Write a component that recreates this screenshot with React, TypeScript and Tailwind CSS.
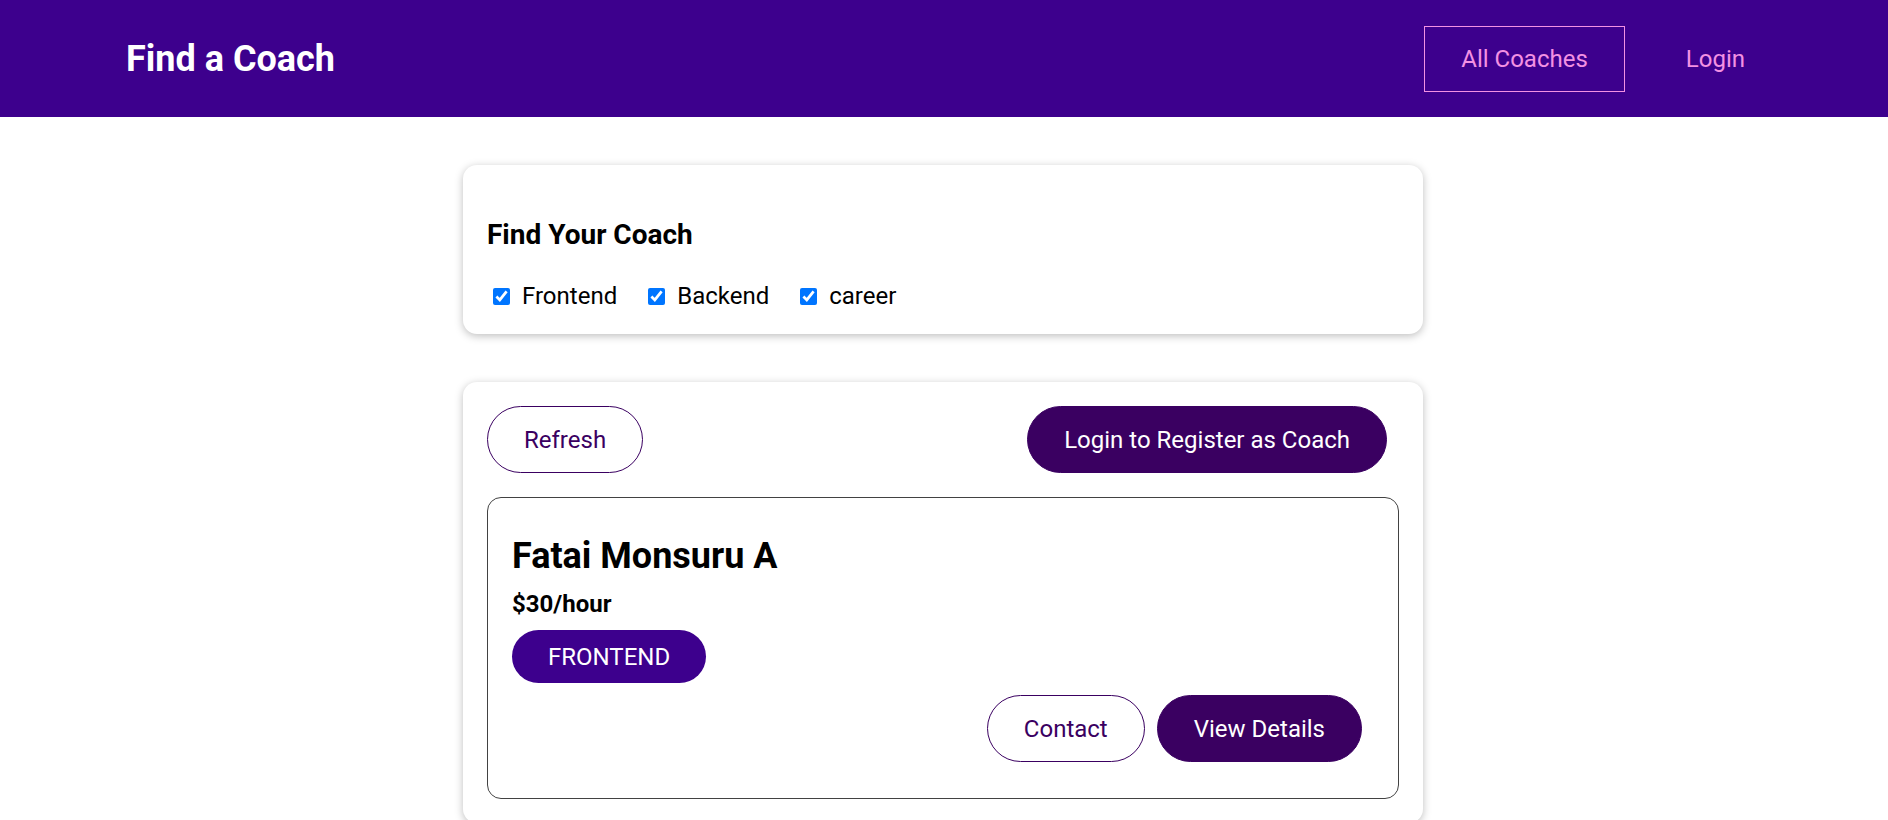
import { useState } from 'react'

const AREAS = [
	{ id: 'frontend', label: 'Frontend' },
	{ id: 'backend', label: 'Backend' },
	{ id: 'career', label: 'career' },
]

function PillButton({ children, outline = false }: { children: React.ReactNode; outline?: boolean }) {
	return (
		<button
			className={`mr-[12px] h-[67px] cursor-pointer rounded-[34px] border border-[#3a0061] px-[36px] text-[24px] leading-[28px] ${
				outline ? 'bg-transparent text-[#3a0061]' : 'bg-[#3a0061] text-white'
			}`}
		>
			{children}
		</button>
	)
}

export default function App() {
	const [filters, setFilters] = useState<Record<string, boolean>>({ frontend: true, backend: true, career: true })

	return (
		<div className="min-h-screen bg-white font-['Roboto',sans-serif] text-black">
			<header className="flex h-[117px] w-full items-center justify-between bg-[#3d008d] pl-[126px] pr-[94px]">
				<h1 className="m-0 text-[36px] font-bold leading-[42px] text-white">Find a Coach</h1>
				<ul className="m-0 flex list-none items-center p-0">
					<li className="mx-[12px]">
						<a className="inline-block border border-[#f391e3] px-[36px] py-[18px] text-[24px] leading-[28px] text-[#f391e3]">
							All Coaches
						</a>
					</li>
					<li className="mx-[12px]">
						<a className="inline-block border border-transparent px-[36px] py-[18px] text-[24px] leading-[28px] text-[#f391e3]">
							Login
						</a>
					</li>
				</ul>
			</header>

			<main className="mx-auto w-[962px] pr-[2px]">
				<section className="mt-[48px] rounded-[14px] bg-white px-[24px] pt-[24px] pb-[24px] shadow-[0_2px_8px_rgba(0,0,0,0.26)]">
					<h2 className="mt-[29px] text-[28px] font-bold leading-[33px]">Find Your Coach</h2>
					<div className="mt-[31px] flex h-[28px] items-center">
						{AREAS.map((a) => (
							<label key={a.id} className="mr-[25px] flex items-center pl-[6px] text-[24px] leading-[28px]">
								<input
									type="checkbox"
									checked={filters[a.id]}
									onChange={(e) => setFilters({ ...filters, [a.id]: e.target.checked })}
									className="m-0 h-[17px] w-[17px] accent-[#0075ff]"
								/>
								<span className="ml-[12px]">{a.label}</span>
							</label>
						))}
					</div>
				</section>

				<section className="mt-[48px] rounded-[14px] bg-white p-[24px] shadow-[0_2px_8px_rgba(0,0,0,0.26)]">
					<div className="flex items-center justify-between">
						<PillButton outline>Refresh</PillButton>
						<PillButton>Login to Register as Coach</PillButton>
					</div>
					<ul className="m-0 mt-[24px] list-none p-0">
						<li className="rounded-[14px] border border-[#424242] p-[24px]">
							<h3 className="mt-[13px] mb-[12px] text-[36px] font-bold leading-[42px]">Fatai Monsuru A</h3>
							<h4 className="mt-[13px] mb-[12px] text-[24px] font-bold leading-[28px]">$30/hour</h4>
							<div>
								<span className="inline-flex h-[53px] items-center rounded-[30px] bg-[#3d008d] px-[36px] text-[24px] text-white">
									FRONTEND
								</span>
							</div>
							<div className="mt-[12px] mb-[12px] flex justify-end">
								<PillButton outline>Contact</PillButton>
								<PillButton>View Details</PillButton>
							</div>
						</li>
					</ul>
				</section>
			</main>
		</div>
	)
}
